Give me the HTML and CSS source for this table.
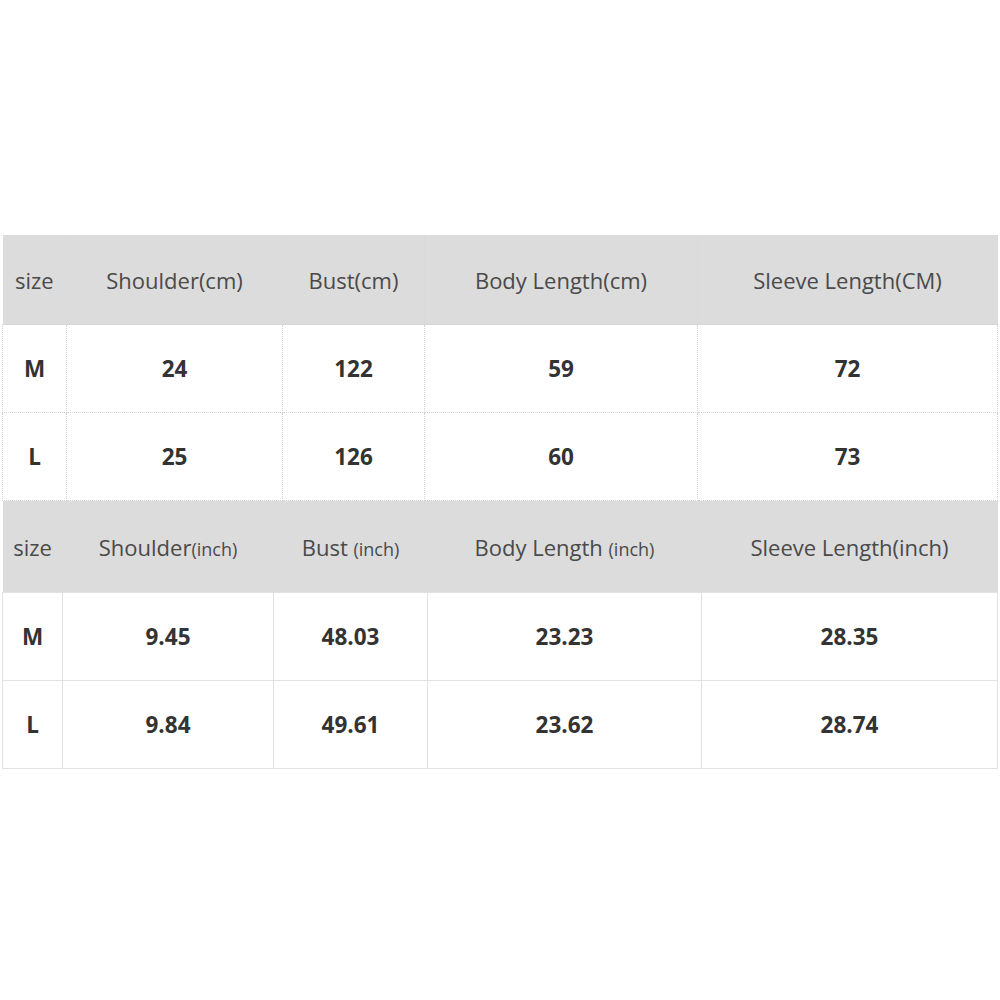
FILE: index.html
```html
<!DOCTYPE html>
<html>
<head>
<meta charset="utf-8">
<link rel="stylesheet" href="styles.css">
</head>
<body>
<div class="wrap">
  <table class="chart cm">
    <colgroup><col class="a1"><col class="a2"><col class="a3"><col class="a4"><col class="a5"></colgroup>
    <tr class="head"><td>size</td><td>Shoulder(cm)</td><td>Bust(cm)</td><td>Body Length(cm)</td><td>Sleeve Length(CM)</td></tr>
    <tr class="row"><td>M</td><td>24</td><td>122</td><td>59</td><td>72</td></tr>
    <tr class="row"><td>L</td><td>25</td><td>126</td><td>60</td><td>73</td></tr>
  </table>
  <table class="chart inch">
    <colgroup><col class="b1"><col class="b2"><col class="b3"><col class="b4"><col class="b5"></colgroup>
    <tr class="head"><td>size</td><td>Shoulder<span class="unit">(inch)</span></td><td>Bust <span class="unit">(inch)</span></td><td>Body Length <span class="unit">(inch)</span></td><td>Sleeve Length(inch)</td></tr>
    <tr class="row"><td>M</td><td>9.45</td><td>48.03</td><td>23.23</td><td>28.35</td></tr>
    <tr class="row"><td>L</td><td>9.84</td><td>49.61</td><td>23.62</td><td>28.74</td></tr>
  </table>
</div>
</body>
</html>
```
FILE: styles.css
```css
html, body { margin: 0; padding: 0; background: #fff; }
body { font-family: "Open Sans", "Noto Sans", sans-serif; }
.wrap { padding-top: 235px; margin-left: 2px; width: 995px; }
.chart { border-collapse: collapse; table-layout: fixed; width: 995px; }
.chart td { text-align: center; vertical-align: middle; padding: 0; }
.head td { background: #dcdcdc; color: #4a4a4a; font-size: 22px; font-weight: 400; }
.row td { color: #333; font-size: 22.5px; font-weight: 700; }
.cm .head td { height: 89px; }
.cm .row td { height: 87px; border: 1px dotted #d2d2d2; }
.cm .head td { border-right: 1px dotted #d8d8d8; }
.inch .head td { height: 91px; }
.inch .row td { height: 87px; border: 1px solid #e2e2e2; }
.unit { font-size: 18px; }
.a1 { width: 64px; } .a2 { width: 216px; } .a3 { width: 142px; } .a4 { width: 273px; } .a5 { width: 300px; }
.b1 { width: 60px; } .b2 { width: 211px; } .b3 { width: 154px; } .b4 { width: 274px; } .b5 { width: 296px; }
```
